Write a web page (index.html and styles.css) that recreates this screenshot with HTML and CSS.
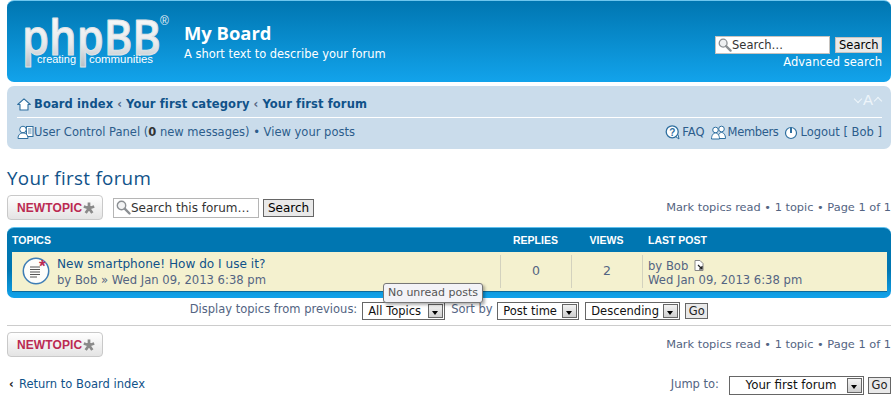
FILE: index.html
```html
<!DOCTYPE html>
<html lang="en">
<head>
<meta charset="utf-8">
<title>My Board - Your first forum</title>
<link rel="stylesheet" href="styles.css">
</head>
<body>
<div class="page">
  <header class="headerbar">
    <div class="logo">
      <svg width="150" height="56" viewBox="0 0 150 56">
        <defs>
          <linearGradient id="lg" x1="0" y1="0" x2="0" y2="1">
            <stop offset="0" stop-color="#ffffff"/>
            <stop offset="0.6" stop-color="#e9ebed"/>
            <stop offset="1" stop-color="#b3bcc3"/>
          </linearGradient>
        </defs>
        <text class="logo-main" x="-1" y="44" textLength="139" lengthAdjust="spacingAndGlyphs" fill="url(#lg)">phpBB</text>
        <text class="logo-reg" x="137" y="14">®</text>
        <text class="logo-sub" x="14" y="52" textLength="39" lengthAdjust="spacingAndGlyphs">creating</text>
        <text class="logo-sub" x="66" y="52" textLength="64" lengthAdjust="spacingAndGlyphs">communities</text>
      </svg>
    </div>
    <div class="site-desc">
      <h1>My Board</h1>
      <p>A short text to describe your forum</p>
    </div>
    <div class="search-box">
      <div class="search-row">
        <div class="search-input">
          <svg class="mag" width="14" height="14" viewBox="0 0 15 15"><circle cx="5.500" cy="5.500" r="4.200" fill="#eef0f2" stroke="#8b8f93" stroke-width="1.400"/><path d="M8.700 8.700 13.500 13.500" stroke="#8b8f93" stroke-width="2.400" stroke-linecap="round"/></svg>
          <span>Search…</span>
        </div>
        <span class="btn-search">Search</span>
      </div>
      <a class="adv">Advanced search</a>
    </div>
  </header>

  <nav class="navbar">
    <div class="crumbs">
      <div class="crumb-left">
        <svg class="ic" width="14" height="13" viewBox="0 0 14 13"><path d="M7 .8 13.300 6.500H11V12H3V6.500H.7Z" fill="#fff" stroke="#2f6f9f" stroke-width="1.100" stroke-linejoin="round"/></svg>
        <a>Board index</a><span class="sep">‹</span><a>Your first category</a><span class="sep">‹</span><a>Your first forum</a>
      </div>
      <div class="fontsize"><i class="chev down"></i><span class="fs-b">A</span><i class="chev up"></i></div>
    </div>
    <div class="userbar">
      <div class="user-left">
        <svg class="ic2" width="17" height="15" viewBox="0 0 17 15"><rect x="9.500" y="1.500" width="6.500" height="10" fill="#fff" stroke="#2f6f9f"/><path d="M11 4h3.500M11 6h3.500M11 8h3.500" stroke="#2f6f9f" stroke-width=".8"/><circle cx="6" cy="4.500" r="3.300" fill="#fff" stroke="#2f6f9f"/><path d="M1 13.500C1 9.500 3.500 8 6 8s5 1.500 5 5.500Z" fill="#fff" stroke="#2f6f9f"/></svg>
        <span>User Control Panel (<b>0</b> new messages) • View your posts</span>
      </div>
      <div class="user-right">
        <span class="ulink"><svg width="15" height="15" viewBox="0 0 15 15"><path d="M10.500 11.500l3.500 2.500-1-4.500" fill="#fff" stroke="#2f6f9f"/><circle cx="7.200" cy="6.800" r="6" fill="#fff" stroke="#2f6f9f" stroke-width="1.300"/><text class="q" x="7.200" y="10.500">?</text></svg>FAQ</span>
        <span class="ulink"><svg width="15" height="15" viewBox="0 0 15 15"><circle cx="4.500" cy="5" r="2.800" fill="#fff" stroke="#2f6f9f"/><circle cx="10.500" cy="4" r="2.800" fill="#fff" stroke="#2f6f9f"/><path d="M7 13.500C7 9.500 8.500 7.500 10.500 7.500S14.500 9.500 14.500 13.500Z" fill="#fff" stroke="#2f6f9f"/><path d="M.5 14C.5 10 2.500 8 4.500 8S8.500 10 8.500 14Z" fill="#fff" stroke="#2f6f9f"/></svg><span class="tight">Members</span></span>
        <span class="ulink logout"><svg width="14" height="15" viewBox="0 0 14 15"><circle cx="7" cy="8" r="5.500" fill="#fff" stroke="#2f6f9f" stroke-width="1.200"/><path d="M7 2.500V8" stroke="#2f6f9f" stroke-width="2"/></svg>Logout [ Bob ]</span>
      </div>
    </div>
  </nav>

  <h2 class="forum-title">Your first forum</h2>

  <div class="action-row">
    <a class="post-btn">NEWTOPIC<svg class="pstar" width="12" height="12" viewBox="0 0 12 12"><path d="M6 .5V6.200M6 6.200 11.200 4.500M6 6.200 9.300 11M6 6.200 2.700 11M6 6.200.8 4.500" stroke="#8a8a8a" stroke-width="2.700"/></svg></a>
    <div class="forum-search">
      <svg class="mag" width="15" height="15" viewBox="0 0 15 15"><circle cx="5.500" cy="5.500" r="4.200" fill="#f2f3f4" stroke="#8b8f93" stroke-width="1.400"/><path d="M8.700 8.700 13.500 13.500" stroke="#8b8f93" stroke-width="2.400" stroke-linecap="round"/></svg>
      <span>Search this forum…</span>
    </div>
    <span class="btn-plain">Search</span>
    <div class="pagination">Mark topics read • 1 topic • Page 1 of 1</div>
  </div>

  <section class="forabg">
    <div class="grid-row head">
      <div class="c-topic">TOPICS</div>
      <div class="c-num">REPLIES</div>
      <div class="c-num">VIEWS</div>
      <div class="c-last head-last">LAST POST</div>
    </div>
    <div class="grid-row topic">
      <div class="c-topic topic-cell">
        <svg class="topic-icon" width="28" height="28" viewBox="0 0 28 28"><circle cx="14" cy="14" r="12.700" fill="#fdfdfb" stroke="#3e7db5" stroke-width="1.500"/><path d="M8 10h10M8 12.500h10M8 15h10M8 17.500h10M8 20h7" stroke="#555" stroke-width="1"/><text class="star" x="17" y="15">*</text></svg>
        <div class="topic-text">
          <a class="topic-title">New smartphone! How do I use it?</a>
          <div class="topic-meta">by Bob » Wed Jan 09, 2013 6:38 pm</div>
        </div>
      </div>
      <div class="c-num cnt">0</div>
      <div class="c-num cnt">2</div>
      <div class="c-last last">
        <div>by Bob <svg class="lastpost" width="10" height="11" viewBox="0 0 10 11"><path d="M1 .5H6L9 3.500V10.500H1Z" fill="#fff" stroke="#888"/><path d="M4 5 8 9M8 6V9H5" fill="none" stroke="#222" stroke-width="1.200"/></svg></div>
        <div>Wed Jan 09, 2013 6:38 pm</div>
      </div>
    </div>
  </section>

  <div class="tooltip">No unread posts</div>

  <div class="sort-row">
    <span class="lab">Display topics from previous:</span>
    <span class="sel w83">All Topics<i class="arrow"></i></span>
    <span class="lab lab-sort">Sort by</span>
    <span class="sel w82">Post time<i class="arrow"></i></span>
    <span class="sel w95">Descending<i class="arrow"></i></span>
    <span class="btn-go">Go</span>
  </div>

  <hr class="rule">

  <div class="action-row second">
    <a class="post-btn">NEWTOPIC<svg class="pstar" width="12" height="12" viewBox="0 0 12 12"><path d="M6 .5V6.200M6 6.200 11.200 4.500M6 6.200 9.300 11M6 6.200 2.700 11M6 6.200.8 4.500" stroke="#8a8a8a" stroke-width="2.700"/></svg></a>
    <div class="pagination">Mark topics read • 1 topic • Page 1 of 1</div>
  </div>

  <div class="foot-row">
    <a class="return"><span class="back">‹</span>Return to Board index</a>
    <div class="jump">
      <span class="lab">Jump to:</span>
      <span class="sel w135 right">Your first forum<i class="arrow"></i></span>
      <span class="btn-go">Go</span>
    </div>
  </div>
</div>
</body>
</html>
```
FILE: styles.css
```css
* { box-sizing: border-box; }
html, body { margin: 0; padding: 0; background: #fff; }
body { font-family: "DejaVu Sans", Verdana, sans-serif; font-size: 11px; color: #536482; width: 896px; height: 400px; overflow: hidden; }
a { color: inherit; text-decoration: none; }
.page { position: relative; padding: 0 5px 0 7px; height: 400px; }

.headerbar { height: 82px; display: flex; border-top: 1px solid #6ec6ee; border-radius: 7px; background: linear-gradient(#0076b1, #12a3eb); color: #fff; }
.logo { width: 177px; padding: 10px 0 0 16px; flex: none; }
.logo svg { display: block; overflow: visible; }
.logo-main { font-family: "Open Sans", sans-serif; font-size: 48px; font-weight: 600; stroke: #dfe3e6; stroke-width: 1px; stroke-linejoin: round; }
.logo-reg { font-family: "Liberation Sans", sans-serif; font-size: 12px; fill: #e6eef4; }
.logo-sub { font-family: "Liberation Sans", sans-serif; font-size: 11px; fill: #fff; }
.site-desc { padding-top: 20px; flex: 1; }
.site-desc h1 { margin: 0; font-size: 18.400px; line-height: 24px; font-weight: bold; font-family: "Open Sans", sans-serif; }
.site-desc p { margin: 2px 0 0; font-size: 11.450px; line-height: 14px; }
.search-box { width: 175px; padding-top: 35px; display: flex; flex-direction: column; align-items: flex-end; padding-right: 9px; }
.search-row { display: flex; align-items: center; gap: 5px; }
.search-input { width: 115px; height: 18px; background: #fff; display: flex; align-items: center; color: #333; font-size: 11.500px; border: 1px solid #c7c3bf; padding-left: 2px; gap: 0; }
.btn-search { height: 16px; background: #e9e9e9; border: 1px solid #c7c3bf; color: #000; font-size: 11.500px; line-height: 14px; padding: 0 3px; width: 47px; text-align: center; }
.adv { font-size: 11.500px; line-height: 14px; margin-top: 1px; }

.navbar { margin-top: 4px; height: 63px; background: #cadceb; border-radius: 7px; padding: 10px 9px 0 10px; color: #105289; }
.crumbs { height: 22px; display: flex; justify-content: space-between; border-bottom: 1px solid #fff; }
.crumb-left { display: flex; align-items: flex-start; font-weight: bold; font-size: 11.500px; line-height: 16px; letter-spacing: .12px; }
.ic { margin: 2px 3px 0 0; }
.sep { margin: 0 4px; color: #536482; }
.fontsize { color: #eef5fa; display: flex; align-items: center; height: 14px; margin-top: -3px; font-family: "Liberation Sans", sans-serif; }
.fs-b { font-size: 15px; line-height: 14px; margin: 0 1px; }
.chev { display: block; width: 6px; height: 6px; border-left: 1.500px solid #eef5fa; border-top: 1.500px solid #eef5fa; margin: 0 1px; }
.chev.down { transform: rotate(225deg); margin-top: -3px; }
.chev.up { transform: rotate(45deg); margin-top: 1px; }
.userbar { display: flex; justify-content: space-between; padding-top: 6px; font-size: 11.500px; line-height: 16px; color: #2c5d8c; }
.user-left, .user-right { display: flex; align-items: center; }
.user-right { gap: 6px; }
.user-left b { color: #333; }
.ulink { display: flex; align-items: center; }
.ulink svg { margin-right: 2px; }
.logout svg { margin-right: 2px; }
.tight { letter-spacing: -.35px; }
.q { font-family: "Liberation Sans", sans-serif; font-weight: bold; font-size: 10px; text-anchor: middle; fill: #2f6f9f; }

.forum-title { margin: 17px 0 0; font-size: 18.800px; line-height: 24px; font-weight: normal; color: #105289; font-family: "Open Sans", sans-serif; letter-spacing: .3px; }
.action-row { display: flex; align-items: center; height: 25px; margin-top: 5px; }
.action-row.second { margin-top: 6px; }
.post-btn { width: 96px; height: 25px; border: 1px solid #c9c9c9; border-radius: 4px; background: linear-gradient(#fff, #e4e4e4); display: flex; align-items: center; padding-left: 9px; color: #bb2a52; font: bold 12px "Liberation Sans", sans-serif; letter-spacing: .1px; }
.pstar { margin-left: 1px; }
.forum-search { margin-left: 10px; width: 146px; height: 20px; border: 1px solid #b5b5b5; display: flex; align-items: center; padding-left: 2px; gap: 0; color: #333; font-size: 12px; }
.btn-plain { margin-left: 4px; width: 51px; height: 18px; background: #e9e9e9; border: 1px solid #666; color: #000; font-size: 12px; line-height: 16px; text-align: center; }
.pagination { margin-left: auto; margin-top: -1px; font-size: 11.350px; color: #536482; }

.forabg { margin-top: 7px; height: 71px; border-top: 1px solid #5fc0ee; border-radius: 7px; background: linear-gradient(#0076b1, #0076b1 60%, #12a3eb); padding: 0 4px 0 5px; }
.grid-row { display: grid; grid-template-columns: 488px 71px 71px 1fr; }
.head { height: 23px; align-items: center; color: #fff; font: bold 10.500px "Liberation Sans", sans-serif; }
.c-num { text-align: center; }
.c-last { padding-left: 5px; }
.head-last { padding-left: 6px; }
.topic { height: 40px; background: #f4f1cf; border-bottom: 1px solid #0d6a9c; margin-top: 1px; padding: 3px 0; font-size: 11.600px; }
.topic-cell { display: flex; padding-left: 10px; }
.topic-icon { margin: 2px 7px 0 0; flex: none; }
.topic-text { padding-top: 1px; }
.star { font: bold 17px "Liberation Sans", sans-serif; fill: #bb2a52; }
.topic-title { display: block; color: #105289; font-size: 12.100px; line-height: 16px; }
.topic-meta { line-height: 16px; }
.cnt { border-left: 1px solid #d3d2be; line-height: 32px; font-size: 12.500px; }
.last { border-left: 1px solid #d3d2be; line-height: 14px; padding-top: 4px; }
.lastpost { vertical-align: -1px; margin-left: 2px; }

.tooltip { position: absolute; left: 383px; top: 283px; width: 100px; height: 20px; background: #f3f3f7; border: 1px solid #777; border-radius: 3px; box-shadow: 2px 2px 3px rgba(0,0,0,.3); text-align: center; line-height: 18px; font-size: 11px; color: #555; z-index: 2; }

.sort-row { margin-top: 4px; height: 18px; display: flex; align-items: flex-start; justify-content: center; font-size: 11.500px; }
.lab { line-height: 14px; padding-top: 0; }
.sel { height: 18px; border: 1px solid #666; background: #fff; color: #111; font-size: 11.500px; line-height: 16px; padding-left: 5px; position: relative; display: block; }
.arrow { position: absolute; right: 1px; top: 1px; width: 15px; height: 14px; background: linear-gradient(#f3f3f3, #cfcfcf); border: 1px solid #666; }
.arrow::after { content: ""; position: absolute; left: 3px; top: 6px; border: 3.500px solid transparent; border-top: 4px solid #000; border-bottom: 0; }
.w83 { width: 83px; margin-left: 5px; }
.lab-sort { margin: 0 4px 0 6px; width: 42px; }
.w82 { width: 82px; }
.w95 { width: 95px; margin-left: 6px; }
.w135 { width: 135px; text-align: center; padding-right: 16px; font-size: 11.800px; }
.btn-go { width: 23px; height: 16px; margin: 1px 0 0 5px; background: #e9e9e9; border: 1px solid #666; color: #222; font-size: 11.500px; line-height: 14px; text-align: center; display: block; }

.rule { margin: 5px 0 0; border: 0; border-top: 1px solid #ccc; height: 0; }
.foot-row { display: flex; justify-content: space-between; margin-top: 19px; font-size: 11.500px; height: 20px; }
.return { color: #105289; padding-top: 1px; line-height: 14px; display: block; }
.back { display: inline-block; width: 12px; padding-left: 2px; font-weight: bold; color: #222; }
.jump { display: flex; align-items: flex-start; }
.jump .lab { padding-top: 1px; margin-right: 10px; }
.jump .btn-go { margin-left: 4px; height: 17px; width: 23px; margin-top: 1px; }
.jump .sel { height: 19px; line-height: 17px; }
.jump .arrow { height: 15px; top: 1px; }
```
